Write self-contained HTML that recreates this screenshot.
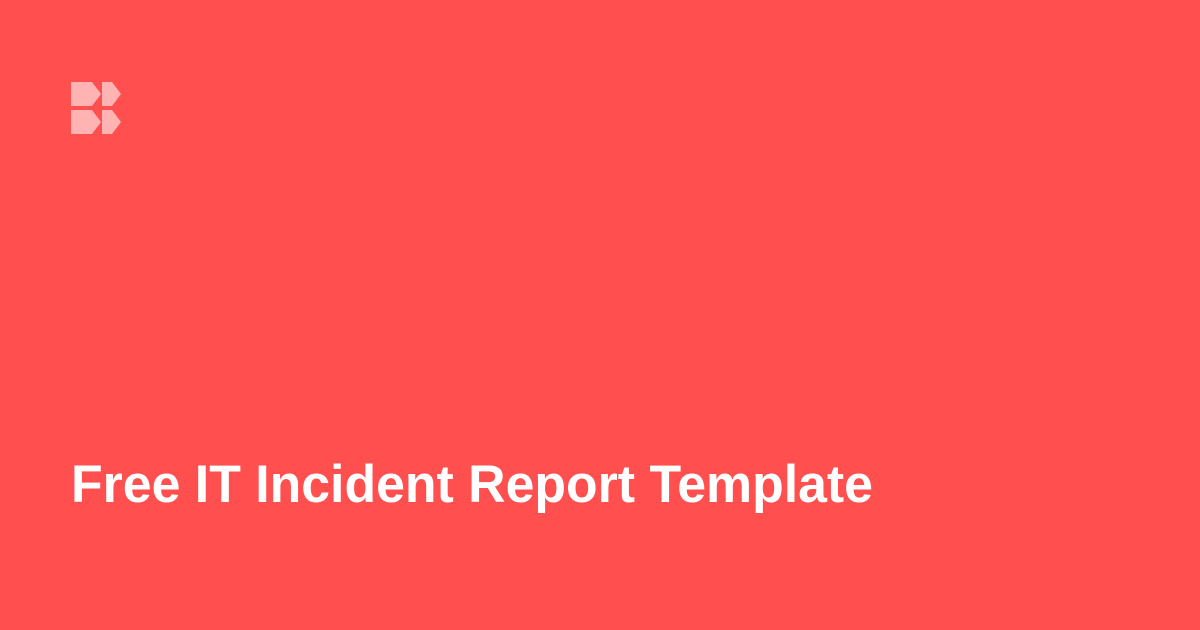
<!DOCTYPE html>
<html><head><meta charset="utf-8"><style>
html,body{margin:0;padding:0;}
body{width:1200px;height:630px;background:#FF4F4F;overflow:hidden;position:relative;}
svg{position:absolute;left:0;top:0;}
</style></head><body>
<svg width="1200" height="630" viewBox="0 0 1200 630">
<g fill="#FFB3B3">
<polygon points="71,82 92,82 101,94 92,106 71,106"/>
<polygon points="102,82 112,82 121,94 112,106 102,106"/>
<polygon points="71,110 92,110 101,122 92,134 71,134"/>
<polygon points="102,110 112,110 121,122 112,134 102,134"/>
</g>
<text x="71" y="502" font-family="Liberation Sans, sans-serif" font-weight="bold" font-size="53" fill="#fff" textLength="802" lengthAdjust="spacingAndGlyphs">Free IT Incident Report Template</text>
</svg>
</body></html>
